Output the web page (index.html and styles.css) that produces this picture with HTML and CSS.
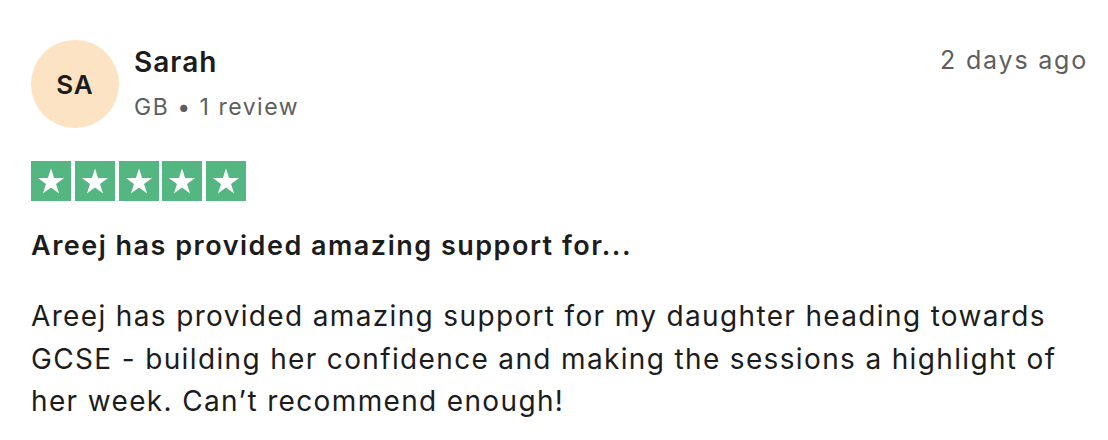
FILE: index.html
```html
<!DOCTYPE html>
<html lang="en">
<head>
<meta charset="utf-8">
<link rel="stylesheet" href="styles.css">
</head>
<body>
<article class="review">
  <header class="review-head">
    <div class="consumer">
      <div class="avatar">SA</div>
      <div class="consumer-info">
        <div class="name">Sarah</div>
        <div class="meta">GB • 1 review</div>
      </div>
    </div>
    <time class="date">2 days ago</time>
  </header>
  <div class="stars" aria-label="Rated 5 out of 5">
    <span class="star"><svg viewBox="0 0 40 40"><path d="M20 7.5l3.1 9.5h10l-8.1 5.9 3.1 9.6-8.1-5.9-8.1 5.9 3.1-9.6-8.1-5.9h10z" fill="#fff"/></svg></span>
    <span class="star"><svg viewBox="0 0 40 40"><path d="M20 7.5l3.1 9.5h10l-8.1 5.9 3.1 9.6-8.1-5.9-8.1 5.9 3.1-9.6-8.1-5.9h10z" fill="#fff"/></svg></span>
    <span class="star"><svg viewBox="0 0 40 40"><path d="M20 7.5l3.1 9.5h10l-8.1 5.9 3.1 9.6-8.1-5.9-8.1 5.9 3.1-9.6-8.1-5.9h10z" fill="#fff"/></svg></span>
    <span class="star"><svg viewBox="0 0 40 40"><path d="M20 7.5l3.1 9.5h10l-8.1 5.9 3.1 9.6-8.1-5.9-8.1 5.9 3.1-9.6-8.1-5.9h10z" fill="#fff"/></svg></span>
    <span class="star"><svg viewBox="0 0 40 40"><path d="M20 7.5l3.1 9.5h10l-8.1 5.9 3.1 9.6-8.1-5.9-8.1 5.9 3.1-9.6-8.1-5.9h10z" fill="#fff"/></svg></span>
  </div>
  <h2 class="title">Areej has provided amazing support for...</h2>
  <p class="body">Areej has provided amazing support for my daughter heading towards GCSE - building her confidence and making the sessions a highlight of her week. Can’t recommend enough!</p>
</article>
</body>
</html>
```
FILE: styles.css
```css
* { box-sizing: border-box; }
html, body { margin: 0; padding: 0; background: #fff; }
body {
  font-family: Inter, "Liberation Sans", Arial, sans-serif;
  color: #1c1c1c;
}
.review {
  padding: 40px 20px 0 31px;
}
.review-head {
  display: flex;
  justify-content: space-between;
  align-items: flex-start;
}
.consumer {
  display: flex;
  align-items: flex-start;
  gap: 15px;
}
.avatar {
  width: 88px;
  height: 88px;
  border-radius: 50%;
  background: #fce3c4;
  display: flex;
  align-items: center;
  justify-content: center;
  font-weight: 600;
  font-size: 26px;
  letter-spacing: 1px;
  color: #1c1c1c;
}
.consumer-info {
  padding-top: 5px;
}
.name {
  font-size: 28px;
  font-weight: 600;
  letter-spacing: 1px;
  line-height: 34px;
  color: #1c1c1c;
}
.meta {
  margin-top: 13px;
  font-size: 23px;
  letter-spacing: 1.5px;
  line-height: 30px;
  color: #5e5e5e;
}
.date {
  margin-top: 4px;
  font-size: 25px;
  letter-spacing: 1.8px;
  line-height: 32px;
  color: #5e5e5e;
}
.stars {
  display: flex;
  gap: 3.75px;
  margin-top: 33px;
}
.star {
  width: 40px;
  height: 40px;
  background: #54b681;
  display: block;
}
.star svg { display: block; width: 40px; height: 40px; }
.title {
  margin: 28px 0 0;
  font-size: 27px;
  font-weight: 600;
  letter-spacing: 1.5px;
  line-height: 34px;
  color: #1c1c1c;
}
.body {
  margin: 32px 0 0;
  font-size: 28px;
  letter-spacing: 1.35px;
  line-height: 42.5px;
  color: #1c1c1c;
}
```
